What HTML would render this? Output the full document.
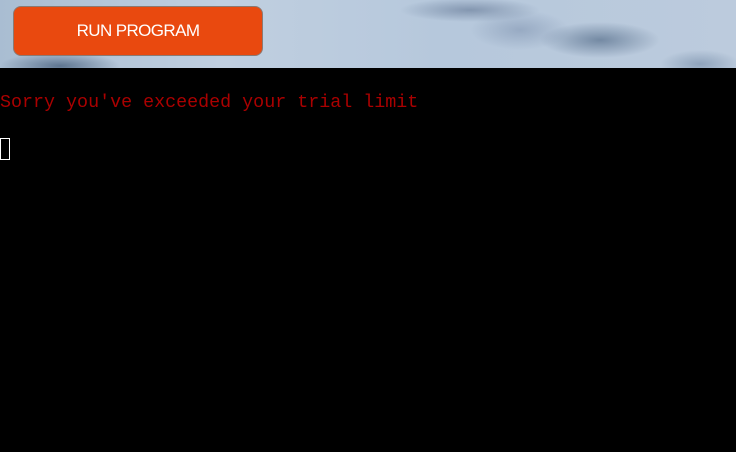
<!DOCTYPE html>
<html><head><style>
html,body{margin:0;padding:0;width:736px;height:452px;overflow:hidden;background:#000}
.top{position:absolute;left:0;top:0;width:736px;height:68px;
background:
radial-gradient(ellipse 60px 14px at 60px 66px,rgba(60,85,115,.7),transparent),
radial-gradient(ellipse 70px 12px at 470px 10px,rgba(90,110,140,.55),transparent),
radial-gradient(ellipse 60px 18px at 600px 40px,rgba(70,95,125,.6),transparent),
radial-gradient(ellipse 40px 14px at 700px 64px,rgba(100,125,155,.5),transparent),
radial-gradient(ellipse 50px 20px at 520px 30px,rgba(120,140,170,.5),transparent),
linear-gradient(90deg,#a9bdd2,#c0cfe0 30%,#b6c8dc 60%,#bccbdd)}
.btn{position:absolute;left:13px;top:6px;width:248px;height:48px;background:#e9490f;border:1px solid #8a7a74;border-radius:8px;color:#fff;font:17px "Liberation Sans",sans-serif;letter-spacing:-0.6px;text-align:center;line-height:48px}
.msg{position:absolute;left:0;top:92px;color:#a00;font:18.35px "Liberation Mono",monospace;white-space:pre;-webkit-text-stroke:0}
.cur{position:absolute;left:0;top:138px;width:8px;height:20px;border:1px solid #fff}
</style></head><body>
<div class="top"></div>
<div class="btn">RUN PROGRAM</div>
<div class="msg">Sorry you've exceeded your trial limit</div>
<div class="cur"></div>
</body></html>
